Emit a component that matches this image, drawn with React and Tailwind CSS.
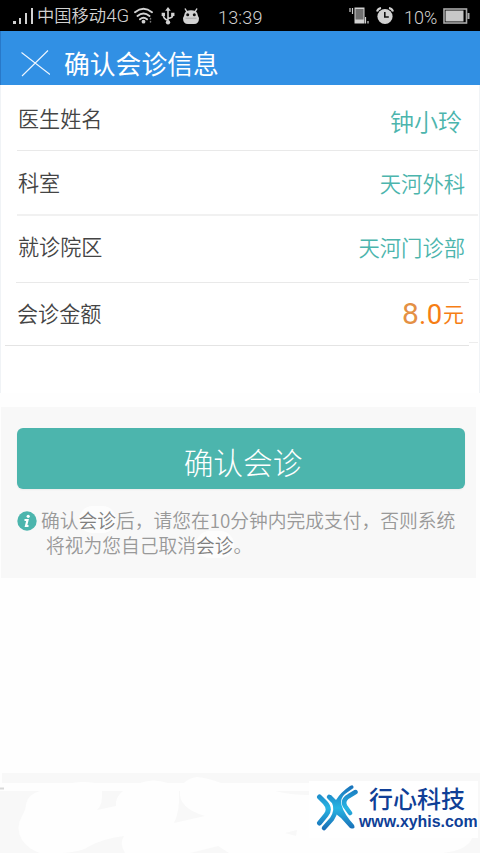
const rows = [
  {
    label: '医生姓名',
    value: '钟小玲',
    row: 'h-[65px] pl-[18px] pr-[18px]',
    labelClass: 'pt-[3px]',
    valueClass: 'text-2xl pt-[7px] text-[#4cb5ad]',
    line: 'h-px ml-[17px] mr-[2px] bg-[#e9e9e9]',
  },
  {
    label: '科室',
    value: '天河外科',
    row: 'h-[63px] pl-[18px] pr-[15px]',
    labelClass: 'pt-0',
    valueClass: 'text-[21.3px] text-[#4cb5ad]',
    line: 'h-[2px] ml-[17px] mr-[2px] bg-[#f1f1f1]',
  },
  {
    label: '就诊院区',
    value: '天河门诊部',
    row: 'h-[66px] pl-[18px] pr-[15px]',
    labelClass: 'pb-[4px]',
    valueClass: 'text-[21.3px] pb-[4px] text-[#4cb5ad]',
    line: 'h-px ml-[16px] bg-[#e9e9e9]',
    tail: true,
  },
  {
    label: '会诊金额',
    row: 'h-[62px] pl-[17px] pr-[16px]',
    labelClass: 'pt-0',
    line: 'h-px ml-[5px] bg-[#e4e4e4]',
    tail: true,
  },
];

const StatusBar = () => (
  <div className="flex h-[31px] items-center bg-black pt-px text-[#d2d2d2]">
    <svg className="ml-[12px] h-[18px] w-[22px] shrink-0" viewBox="0 0 22 18" fill="currentColor">
      <rect x="1" y="14" width="3" height="3" />
      <rect x="7" y="11" width="2" height="6" />
      <rect x="13" y="6" width="2" height="11" />
      <rect x="19" y="1" width="2" height="16" />
    </svg>
    <span className="ml-[3px] w-[94px] whitespace-nowrap text-[17.3px] leading-none font-[350]">
      中国移动<span className="font-[Roboto] text-[18.5px]">4G</span>
    </span>
    <svg className="ml-[3px] h-[18px] w-[19px] shrink-0" viewBox="0 0 19 18" fill="none" stroke="currentColor" strokeWidth="1.9" strokeLinecap="round">
      <path d="M1 5.2Q9.500 -1.500 18 5.200M3.500 9Q9.500 4 15.500 9M6 12.300Q9.500 9.300 13 12.300" />
      <circle cx="9.500" cy="14.700" r="1.900" fill="currentColor" stroke="none" />
      <path d="M16.500 11.500v.5M16.500 14.500v.5" stroke="#777" strokeWidth="1.500" />
    </svg>
    <svg className="ml-[8px] h-[18px] w-[14px] shrink-0" viewBox="0 0 14 19" fill="none" stroke="currentColor" strokeWidth="1.7">
      <path d="M7 3v13M7 14Q2 13 2 8M7 12Q12 12 12 8" />
      <path d="M7 0l3 4H4z" fill="currentColor" stroke="none" />
      <circle cx="7" cy="16.200" r="2.300" fill="currentColor" stroke="none" />
      <path d="M.3 6h3.500v3.500H.3zM10.300 6h3.500v3.500h-3.500z" fill="currentColor" stroke="none" />
    </svg>
    <svg className="ml-[7px] h-[18px] w-[18px] shrink-0" viewBox="0 0 18 18" fill="currentColor">
      <path d="M3 1.500L5 5M15 1.500L13 5" stroke="currentColor" strokeWidth="1.500" />
      <path d="M4.500 4Q9 2.500 13.500 4Q16 6 16 9L17 11Q17 17 12 17H6Q1 17 1 11L2 9Q2 6 4.500 4z" />
      <circle cx="5.700" cy="7.700" r="1.500" fill="#111" />
      <circle cx="12.300" cy="7.700" r="1.500" fill="#111" />
      <path d="M3.500 11.200h11" stroke="#999" strokeWidth=".8" />
    </svg>
    <span className="ml-[18px] w-[47px] whitespace-nowrap pt-[3px] font-[Roboto] text-[18px] leading-none font-light tracking-[0.2px]">13:39</span>
    <svg className="ml-auto h-[18px] w-[20px] shrink-0" viewBox="0 0 20 18" fill="currentColor">
      <path d="M1 1v4M3.500 1v6M16.500 10v6.500M19 14v2.500" stroke="currentColor" strokeWidth="1.200" />
      <path d="M5.500 .5H15.500V16.500H5.500z" />
      <path d="M6.500 2h8v10.500h-8z" fill="#707070" />
    </svg>
    <svg className="ml-[7px] h-[18px] w-[18px] shrink-0" viewBox="0 0 18 18">
      <path d="M1 4.500Q2 1.500 5 1M17 4.500Q16 1.500 13 1" fill="none" stroke="#d2d2d2" strokeWidth="2" />
      <circle cx="9" cy="9.500" r="7.600" fill="#d2d2d2" />
      <path d="M8.800 5v5h4" fill="none" stroke="#111" strokeWidth="1.600" />
    </svg>
    <span className="ml-[10px] w-[35px] whitespace-nowrap pt-[3px] font-[Roboto] text-[18px] leading-none font-light">10%</span>
    <svg className="mr-[10px] ml-[4px] h-[16px] w-[27px] shrink-0" viewBox="0 0 27 16">
      <rect x="1" y="1" width="22.500" height="14" fill="none" stroke="#aaa" strokeWidth="1.600" />
      <rect x="2.500" y="2.500" width="18" height="11" fill="#c8c8c8" />
      <rect x="24.500" y="5" width="2" height="6" fill="#aaa" />
    </svg>
  </div>
);

const Header = () => (
  <div className="flex h-[54px] items-center border-l border-[#2878c8] bg-[#3190e4] pt-[10px] text-white">
    <svg className="ml-[20px] h-[27px] w-[29px]" viewBox="0 0 29 27" fill="none" stroke="#eef6ff" strokeWidth="1.100">
      <path d="M.5 2.500L29 24.500M27 .5L1 26" />
    </svg>
    <h1 className="ml-[14px] text-[25.8px] leading-none font-normal">确认会诊信息</h1>
  </div>
);

const InfoRow = ({ item }) => (
  <div>
    <div className={`flex items-center justify-between ${item.row}`}>
      <span className={`text-[21.1px] leading-none font-[350] text-[#444] ${item.labelClass}`}>{item.label}</span>
      {item.value ? (
        <span className={`leading-none font-[350] ${item.valueClass}`}>{item.value}</span>
      ) : (
        <span className="flex items-baseline leading-none text-[#f67e14]">
          <span className="font-[Roboto] text-[30px] leading-none text-[#e49044]">8</span>
          <span className="font-[Roboto] text-[27.5px] leading-none tracking-[0.7px]">.0</span>
          <span className="pb-[4px] text-[21px] leading-none relative -top-[2px]">元</span>
        </span>
      )}
    </div>
    <div className="flex items-end">
      <div className={`grow ${item.line}`} />
      {item.tail && <div className="-mt-[3px] mr-[2px] mb-[3px] h-px w-[9px] bg-[#ededed]" />}
    </div>
  </div>
);

const Notice = () => (
  <div className="mt-[18px] flex pl-[16px]">
    <svg className="mt-[4px] h-5 w-5 shrink-0" viewBox="0 0 20 20">
      <circle cx="10" cy="10" r="9.700" fill="#4cb5ad" />
      <circle cx="11.200" cy="5.300" r="1.600" fill="#fff" />
      <path d="M7.500 9h3l-1.500 6h2.500" fill="none" stroke="#fff" strokeWidth="2.200" />
    </svg>
    <p className="ml-[4px] whitespace-nowrap text-[18.75px] leading-[25px] font-[350] text-[#999]">
      确认<span className="rounded-full bg-[#fdfdfd] text-[#808080]">会诊</span>后，请您在10分钟内完成支付，否则系统
      <br />
      <span className="pl-[5px]">将视为您自己取消</span>
      <span className="rounded-full bg-[#fdfdfd] text-[#808080]">会诊</span>。
    </p>
  </div>
);

const Logo = () => (
  <div className="absolute right-[2px] bottom-[15px] flex h-[57px] w-[169px] bg-white">
    <svg className="mt-[2px] ml-[7px] h-[50px] w-[42px] shrink-0" viewBox="0 0 42 50" fill="none" strokeLinecap="round" strokeLinejoin="round">
      <defs>
        <linearGradient id="wave" x1="0" y1="0" x2="0" y2="50" gradientUnits="userSpaceOnUse">
          <stop offset="0" stopColor="#1769b5" />
          <stop offset="0.500" stopColor="#27b5e3" />
          <stop offset="1" stopColor="#1761ae" />
        </linearGradient>
      </defs>
      <g stroke="url(#wave)">
        <path d="M3.500 14L9 19.500Q15 26 10 32L3.500 40" strokeWidth="5" />
        <path d="M13 14L18 19Q22 27 16 36L8 45" strokeWidth="4.500" />
        <path d="M39.500 9L33 13Q26 17 29 23L34 30" strokeWidth="4.500" />
      </g>
      <path
        d="M12 12L15 12L20 17Q25 9 34 3Q38 1 37.500 5L29 11Q24 15 25.500 22Q28 31 38 42Q40 47 34 45L25 35L20 31Q18 35 14 39Q18 31 19 27Q20 22 12 15z"
        fill="url(#wave)"
      />
    </svg>
    <div className="ml-[1px] flex flex-col text-[#103f97]">
      <span className="mt-[5px] ml-[10px] whitespace-nowrap text-[24px] leading-[24px] font-medium">行心科技</span>
      <span className="mt-[4px] font-['Liberation_Sans'] text-[15.9px] leading-[16px] font-bold">www.xyhis.com</span>
    </div>
  </div>
);

const Footer = () => (
  <div className="relative mt-auto h-[80px]">
    <svg className="block h-full w-full" viewBox="0 0 480 80" fill="#f8f8f8">
      <path d="M2 0H480V10H221Q208 5 197 4Q189 5 184 10H168Q153 5 140 10H95Q83 8 72 10H2z" />
      <path d="M0 18H40Q28 21 26 31Q26 36 22 43Q15 55 22 67Q28 76 40 80H0z" />
      <path d="M102 18Q103 32 97 37L116 33Q115 24 123 18z" />
      <path d="M179 18Q180 38 174 50L205 43Q178 35 180 18z" />
      <path d="M55 80Q78 80 88 74Q101 66 124 63Q119 70 125 80z" />
      <path d="M190 80L218 73L229 80z" />
      <path d="M275 18H309V22Q290 22 275 18zM285 60L297 57L296 63z" />
      <path d="M478 8h2v72H443Q468 77 472 65h6z" />
      <path d="M0 15.500h4" stroke="#d8d8d8" strokeWidth="2" />
    </svg>
    <Logo />
  </div>
);

export default function App() {
  return (
    <div className="flex h-[853px] w-[480px] flex-col overflow-hidden bg-[#fefefe] font-['Noto_Sans_CJK_SC',sans-serif]">
      <StatusBar />
      <Header />
      <div className="h-[308px] border-x border-[#f0f3f6] bg-white">
        <div className="-mx-px">
          {rows.map((item) => (
            <InfoRow key={item.label} item={item} />
          ))}
        </div>
      </div>
      <div className="mt-[14px] mr-[4px] ml-px h-[171px] bg-[#f8f8f8] pt-[21px]">
        <button className="ml-[16px] block h-[61px] w-[448px] rounded-md bg-[#4cb5ad] pt-[7px] pl-[4px] text-[29.7px] leading-none font-light text-white shadow-xs">
          确认会诊
        </button>
        <Notice />
      </div>
      <Footer />
    </div>
  );
}
